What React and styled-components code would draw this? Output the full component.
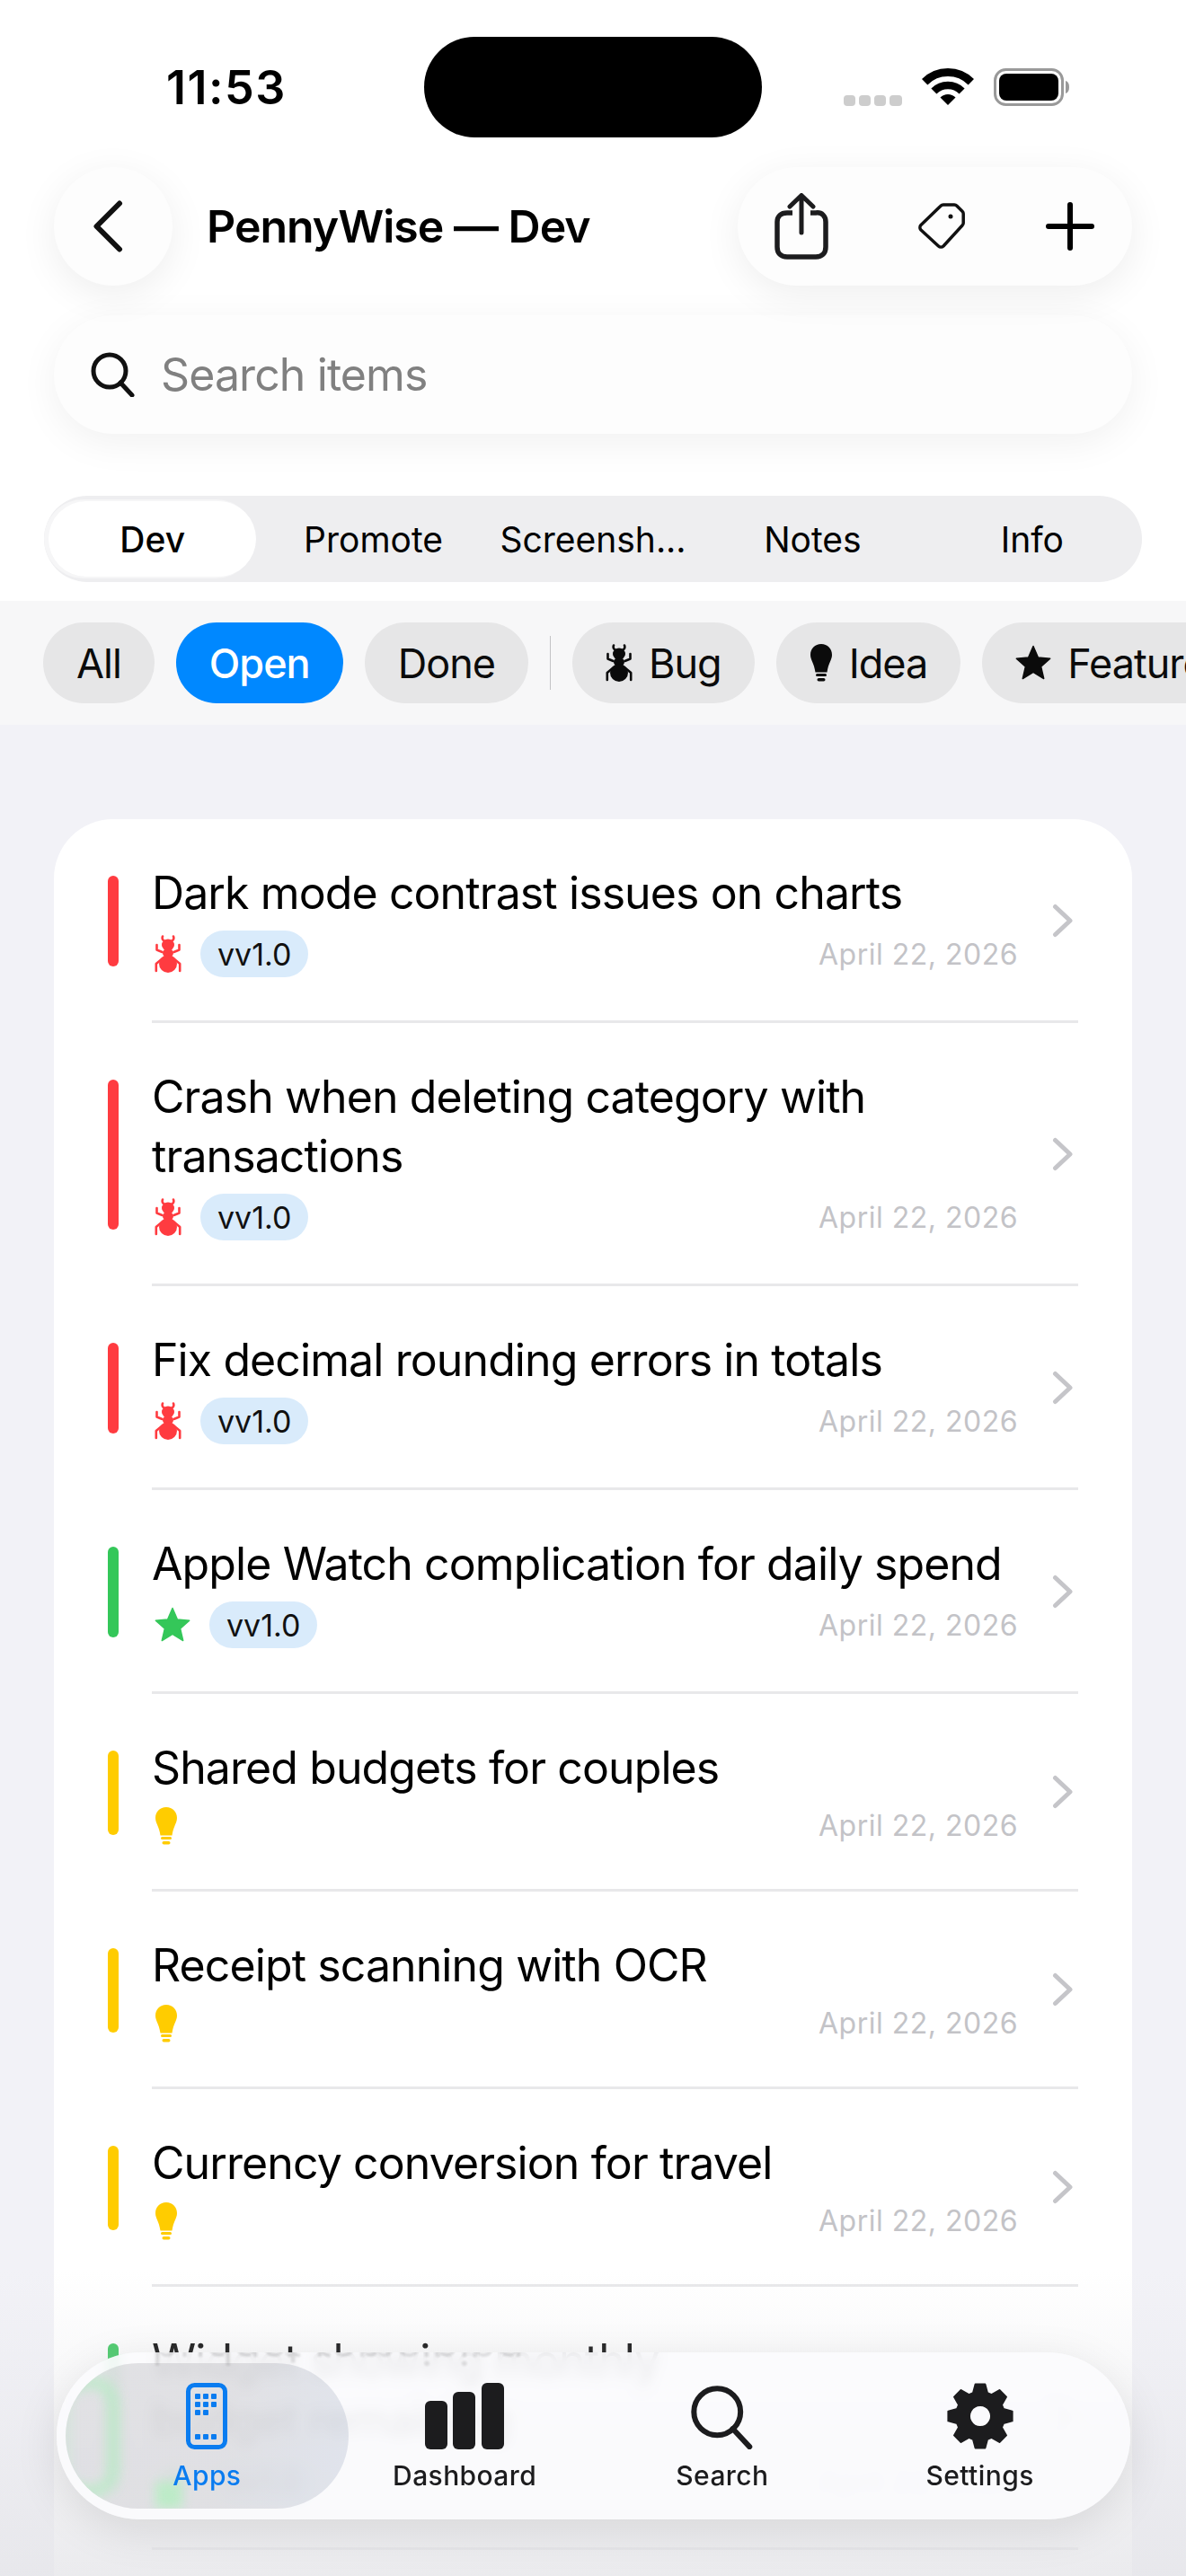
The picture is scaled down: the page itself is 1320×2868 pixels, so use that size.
import React from "react";
import styled, { createGlobalStyle } from "styled-components";

const GlobalStyle = createGlobalStyle`
  html, body {
    margin: 0;
    padding: 0;
    background: #f2f2f7;
  }
  * {
    box-sizing: border-box;
  }
`;

const ITEMS = [
  { title: "Dark mode contrast issues on charts", type: "bug", version: "vv1.0" },
  { title: "Crash when deleting category with transactions", type: "bug", version: "vv1.0" },
  { title: "Fix decimal rounding errors in totals", type: "bug", version: "vv1.0" },
  { title: "Apple Watch complication for daily spend", type: "feature", version: "vv1.0" },
  { title: "Shared budgets for couples", type: "idea" },
  { title: "Receipt scanning with OCR", type: "idea" },
  { title: "Currency conversion for travel", type: "idea" },
  { title: ["Widget showing monthly", "budget remaining"], type: "feature", version: "vv1.0" },
];

const TYPE_COLOR = { bug: "#ff3b40", feature: "#34c759", idea: "#ffcc00" };

const AntIcon = ({ size = 42, color = "currentColor" }) => (
  <svg width={(size * 30) / 42} height={size} viewBox="0 0 30 42" fill="none">
    <g stroke={color} strokeWidth="2.6" strokeLinecap="round" strokeLinejoin="round">
      <path d="M9 1.5c-1 2.5 0 4.5 3 5.5M21 1.5c1 2.5 0 4.5-3 5.5" />
      <path d="M2.5 11v5.5l6 2.5M27.5 11v5.5l-6 2.5" />
      <path d="M1.8 40v-8l6-5M28.200 40v-8l-6-5" />
    </g>
    <ellipse cx="15" cy="11" rx="7" ry="6.500" fill={color} />
    <ellipse cx="15" cy="20" rx="6" ry="5" fill={color} />
    <ellipse cx="15" cy="32" rx="10" ry="10" fill={color} />
  </svg>
);

const BulbIcon = ({ size = 42, color = "currentColor" }) => (
  <svg width={(size * 26) / 42} height={size} viewBox="0 0 26 42" fill="none">
    <path
      d="M13 0C6 0 1 5 1 12c0 6 4 9 5.500 19.500h13C21 21 25 18 25 12 25 5 20 0 13 0z"
      fill={color}
    />
    <rect x="7" y="33" width="12" height="3" rx="1.500" fill={color} />
    <rect x="8.500" y="38" width="9" height="3.500" rx="1.750" fill={color} />
  </svg>
);

const StarIcon = ({ size = 40, color = "currentColor" }) => (
  <svg width={size} height={size} viewBox="0 0 40 40">
    <path
      d="M20 1.500l5.400 12.600 13.300 1.100-10.100 8.900 3.100 13.400L20 30.400 8.300 37.500l3.100-13.400L1.300 15.200l13.300-1.100z"
      fill={color}
      stroke={color}
      strokeWidth="1.500"
      strokeLinejoin="round"
    />
  </svg>
);

const TypeIcon = ({ type, color }) => {
  if (type === "bug") return <AntIcon color={color} />;
  if (type === "idea") return <BulbIcon color={color} />;
  return <StarIcon color={color} />;
};

// 8 tooth cog, worked out once so the path stays readable in the markup
const gearPath = (() => {
  const cx = 37;
  const cy = 36;
  const parts = [];
  for (let i = 0; i < 8; i++) {
    const a = (i * Math.PI) / 4 - Math.PI / 2;
    const pts = [
      [-0.3, 27],
      [-0.15, 36],
      [0.15, 36],
      [0.3, 27],
    ];
    pts.forEach(([da, r], j) => {
      const x = (cx + r * Math.cos(a + da)).toFixed(1);
      const y = (cy + r * Math.sin(a + da)).toFixed(1);
      parts.push(`${i === 0 && j === 0 ? "M" : "L"}${x} ${y}`);
    });
  }
  return parts.join(" ") + "z M37 24a12 12 0 1 0 .01 0z";
})();

const SignalDots = () => (
  <svg width="65" height="12" viewBox="0 0 65 12" fill="#cdcdcd">
    <rect x="0" width="13" height="12" rx="4" />
    <rect x="17" width="13" height="12" rx="4" />
    <rect x="34" width="13" height="12" rx="4" />
    <rect x="51" width="14" height="12" rx="4" />
  </svg>
);

const WifiIcon = () => (
  <svg width="58" height="42" viewBox="0 0 58 42" fill="none" stroke="#000">
    <path d="M3.200 15.200a36.500 36.500 0 0 1 51.600 0" strokeWidth="9" />
    <path d="M13.400 25.400a22 22 0 0 1 31.200 0" strokeWidth="8.500" />
    <path d="M29 41l-8.500-8.500a12 12 0 0 1 17 0z" fill="#000" stroke="none" />
  </svg>
);

const BatteryIcon = () => (
  <svg width="84" height="42" viewBox="0 0 84 42" fill="none">
    <rect x="1.500" y="1.500" width="75" height="39" rx="12" stroke="#999" strokeWidth="3" />
    <rect x="6" y="6" width="66" height="30" rx="8" fill="#000" />
    <path d="M80 14c2.500.5 4 3 4 7s-1.500 6.500-4 7z" fill="#999" />
  </svg>
);

const BackIcon = () => (
  <svg width="34" height="58" viewBox="0 0 34 58" fill="none">
    <path d="M30 3.500L4.500 29 30 54.500" stroke="#111" strokeWidth="6" strokeLinecap="round" strokeLinejoin="round" />
  </svg>
);

const ShareIcon = () => (
  <svg width="60" height="74" viewBox="0 0 60 74" fill="none" stroke="#1c1c1e" strokeLinecap="round" strokeLinejoin="round">
    <path d="M20 22H14C7 22 3 26 3 32v28c0 7 4 11 11 11h32c7 0 11-4 11-11V32c0-6-4-11-11-10h-6" strokeWidth="5.500" strokeLinecap="butt" />
    <path d="M30 44V3M17 15L30 2.500 43 15" strokeWidth="5" />
  </svg>
);

const TagIcon = () => (
  <svg width="52" height="52" viewBox="0 0 52 52" fill="none" stroke="#111" strokeWidth="3.500" strokeLinejoin="round">
    <path d="M28 2h12a4 4 0 0 1 3 1.200l6 6a4 4 0 0 1 1.200 3V22a4 4 0 0 1-1.200 3L28 48a4 4 0 0 1-5.500 0L3 30a4 4 0 0 1 0-5.500L25 3.200A4 4 0 0 1 28 2z" />
    <circle cx="36" cy="15" r="2.500" fill="#111" stroke="none" />
  </svg>
);

const PlusIcon = () => (
  <svg width="54" height="54" viewBox="0 0 54 54" fill="none">
    <path d="M27 3v48M3 27h48" stroke="#000" strokeWidth="6" strokeLinecap="round" />
  </svg>
);

const SearchGlass = ({ size = 50, stroke = 5, color = "#111" }) => (
  <svg width={size} height={size} viewBox="0 0 50 50" fill="none">
    <ellipse cx="21" cy="21" rx="18" ry="18" stroke={color} strokeWidth={stroke} />
    <path d="M33 34l13 14" stroke={color} strokeWidth={stroke} strokeLinecap="round" />
  </svg>
);

const RowChevron = () => (
  <svg width="24" height="38" viewBox="0 0 24 38" fill="none">
    <path d="M3.500 3.500L20 19 3.500 34.500" stroke="#c5c5c9" strokeWidth="5" strokeLinecap="round" strokeLinejoin="round" />
  </svg>
);

const AppsIcon = () => (
  <svg width="46" height="74" viewBox="0 0 46 74" fill="#0a7cf0">
    <rect x="2.500" y="2.500" width="41" height="69" rx="7" fill="none" stroke="#0a7cf0" strokeWidth="5" />
    {[10, 19, 28].map((x) =>
      [12, 21].map((y) => <rect key={`${x}-${y}`} x={x} y={y} width="6" height="6" rx="1" />)
    )}
    <rect x="10" y="30" width="6" height="6" rx="1" />
    <rect x="19" y="30" width="6" height="6" rx="1" />
    {[10, 19, 28].map((x) => (
      <rect key={x} x={x} y="57" width="6" height="6" rx="1" />
    ))}
  </svg>
);

const BarsIcon = () => (
  <svg width="88" height="74" viewBox="0 0 88 74" fill="#1c1c1e">
    <rect x="0" y="20" width="25" height="54" rx="6" />
    <rect x="31" y="10" width="25" height="64" rx="6" />
    <rect x="63" y="0" width="25" height="74" rx="6" />
  </svg>
);

const GearIcon = () => (
  <svg width="74" height="74" viewBox="0 0 74 72" fill="#1c1c1e" fillRule="evenodd">
    <path d={gearPath} stroke="#1c1c1e" strokeWidth="2" strokeLinejoin="round" />
  </svg>
);

const App = () => {
  return (
    <Screen>
      <GlobalStyle />
      <Header>
        <StatusBar>
          <Clock>11:53</Clock>
          <StatusIcons>
            <SignalDots />
            <WifiIcon />
            <BatteryIcon />
          </StatusIcons>
        </StatusBar>
        <Island />

        <NavRow>
          <BackButton>
            <BackIcon />
          </BackButton>
          <PageTitle>PennyWise — Dev</PageTitle>
          <ActionPill>
            <ShareIcon />
            <TagIcon />
            <PlusIcon />
          </ActionPill>
        </NavRow>

        <SearchBox>
          <SearchGlass />
          <SearchText>Search items</SearchText>
        </SearchBox>

        <Segments>
          {["Dev", "Promote", "Screensh...", "Notes", "Info"].map((label, i) => (
            <Segment key={label} $active={i === 0}>
              {label}
            </Segment>
          ))}
        </Segments>
      </Header>

      <FilterBar>
        <Chip>All</Chip>
        <Chip $active>Open</Chip>
        <Chip>Done</Chip>
        <ChipDivider />
        <Chip>
          <AntIcon color="#0b0b0b" />
          Bug
        </Chip>
        <Chip>
          <BulbIcon color="#0b0b0b" />
          Idea
        </Chip>
        <Chip>
          <StarIcon color="#0b0b0b" />
          Features
        </Chip>
      </FilterBar>

      <ListArea>
        <Card>
          {ITEMS.map((item) => {
            const lines = [].concat(item.title);
            const color = TYPE_COLOR[item.type];
            return (
              <Row key={lines[0]}>
                <Accent $color={color} />
                <RowBody>
                  <RowMain>
                    <RowTitle>
                      {lines.map((line) => (
                        <RowLine key={line}>{line}</RowLine>
                      ))}
                    </RowTitle>
                    <RowMeta>
                      <TypeIcon type={item.type} color={color} />
                      {item.version && <Version>{item.version}</Version>}
                      <RowDate>April 22, 2026</RowDate>
                    </RowMeta>
                  </RowMain>
                  <ChevronSlot>
                    <RowChevron />
                  </ChevronSlot>
                </RowBody>
              </Row>
            );
          })}
        </Card>
      </ListArea>

      <BottomFade />

      <TabBar>
        <Reflection aria-hidden="true">budget remaining</Reflection>
        <TabLens>
          <LensRing />
          <LensSpot />
        </TabLens>
        <Tab $active>
          <TabIcon>
            <AppsIcon />
          </TabIcon>
          Apps
        </Tab>
        <Tab>
          <TabIcon>
            <BarsIcon />
          </TabIcon>
          Dashboard
        </Tab>
        <Tab>
          <TabIcon>
            <SearchGlass size={72} stroke={4.200} color="#1c1c1e" />
          </TabIcon>
          Search
        </Tab>
        <Tab>
          <TabIcon>
            <GearIcon />
          </TabIcon>
          Settings
        </Tab>
      </TabBar>
    </Screen>
  );
};

export default App;

const Screen = styled.div`
  position: relative;
  width: 1320px;
  height: 2868px;
  overflow: hidden;
  background: #f2f2f7;
  font-family: Inter, "Liberation Sans", sans-serif;
  color: #000;
`;

const Header = styled.div`
  position: relative;
  background: #fff;
  padding-bottom: 21px;
`;

const StatusBar = styled.div`
  height: 186px;
  display: flex;
  align-items: flex-start;
  justify-content: space-between;
  padding: 70px 130px 0 185px;
`;

const Clock = styled.div`
  font-size: 52px;
  font-weight: 600;
  line-height: 56px;
  letter-spacing: 1.5px;
`;

const StatusIcons = styled.div`
  display: flex;
  align-items: flex-end;
  gap: 22px;
  margin-top: 6px;
`;

const Island = styled.div`
  position: absolute;
  left: 472px;
  top: 41px;
  width: 376px;
  height: 112px;
  border-radius: 56px;
  background: #000;
`;

const NavRow = styled.div`
  display: flex;
  align-items: center;
  height: 132px;
  padding: 0 60px;
`;

const BackButton = styled.div`
  width: 132px;
  height: 132px;
  border-radius: 50%;
  background: #fdfdfd;
  box-shadow: 0 10px 44px rgba(0, 0, 0, 0.07);
  display: flex;
  align-items: center;
  justify-content: center;
  padding-right: 12px;
`;

const PageTitle = styled.div`
  flex: 1;
  margin-left: 38px;
  font-size: 50px;
  font-weight: 600;
  letter-spacing: -1px;
`;

const ActionPill = styled.div`
  width: 439px;
  height: 132px;
  border-radius: 66px;
  background: #fdfdfd;
  box-shadow: 0 10px 44px rgba(0, 0, 0, 0.07);
  display: flex;
  align-items: center;
  justify-content: space-between;
  padding: 0 42px 0 41px;

  svg:nth-child(2) {
    margin-left: 10px;
  }
`;

const SearchBox = styled.div`
  margin: 33px 60px 0;
  height: 132px;
  border-radius: 66px;
  background: #fdfdfd;
  box-shadow: 0 10px 44px rgba(0, 0, 0, 0.06);
  display: flex;
  align-items: center;
  gap: 28px;
  padding: 0 41px;
`;

const SearchText = styled.div`
  font-size: 50px;
  color: #808080;
  letter-spacing: -0.9px;
`;

const Segments = styled.div`
  margin: 69px 49px 0;
  height: 96px;
  border-radius: 48px;
  background: #eeeef0;
  display: grid;
  grid-template-columns: repeat(5, 1fr);
  align-items: stretch;
`;

const Segment = styled.div`
  display: flex;
  align-items: center;
  justify-content: center;
  font-size: 39px;
  font-weight: ${(p) => (p.$active ? 500 : 400)};
  border-radius: 42px;
  background: ${(p) => (p.$active ? "#fff" : "transparent")};
  margin: ${(p) => (p.$active ? "6px 8px 6px 5px" : "0")};
  box-shadow: ${(p) => (p.$active ? "-3px 0 0 2px #f6f6f7" : "none")};
`;

const FilterBar = styled.div`
  height: 138px;
  background: #f7f7f8;
  display: flex;
  align-items: center;
  gap: 24px;
  padding: 0 48px;
  overflow: hidden;
`;

const Chip = styled.div`
  flex-shrink: 0;
  height: 90px;
  border-radius: 45px;
  padding: 0 37px;
  display: flex;
  align-items: center;
  gap: 18px;
  font-size: 45px;
  letter-spacing: -1px;
  font-weight: ${(p) => (p.$active ? 500 : 400)};
  color: ${(p) => (p.$active ? "#fff" : "#0b0b0b")};
  background: ${(p) => (p.$active ? "#0088ff" : "#e6e6e7")};
`;

const ChipDivider = styled.div`
  flex-shrink: 0;
  width: 1px;
  height: 60px;
  background: #c4c4c6;
`;

const ListArea = styled.div`
  padding: 105px 60px 0;
`;

const Card = styled.div`
  background: #fff;
  border-radius: 66px;
  padding-bottom: 120px;
`;

const Row = styled.div`
  display: flex;
  padding-left: 60px;
`;

const Accent = styled.div`
  flex-shrink: 0;
  width: 12px;
  margin: 63px 37px 63px 0;
  border-radius: 6px;
  background: ${(p) => p.$color};
`;

const RowBody = styled.div`
  flex: 1;
  min-width: 0;
  display: flex;
  margin-right: 60px;
  padding: 49px 0 48px;
  border-bottom: 3px solid #e8e8ea;
`;

const RowMain = styled.div`
  flex: 1;
  min-width: 0;
`;

const RowTitle = styled.div`
  font-size: 50px;
  line-height: 66px;
  letter-spacing: -0.9px;
`;

const RowLine = styled.span`
  &:not(:last-child)::after {
    content: "\\A";
    white-space: pre;
  }
`;

const RowMeta = styled.div`
  margin-top: 9px;
  min-height: 45px;
  display: flex;
  align-items: center;
  gap: 21px;
  padding-left: 3px;
`;

const Version = styled.div`
  height: 52px;
  padding: 0 19px;
  border-radius: 26px;
  background: #d9ebfb;
  display: flex;
  align-items: center;
  font-size: 34px;
  font-weight: 400;
  color: #111;
`;

const RowDate = styled.div`
  margin-left: auto;
  font-size: 32px;
  color: #c3c3c7;
  letter-spacing: 0.5px;
`;

const ChevronSlot = styled.div`
  flex-shrink: 0;
  width: 67px;
  display: flex;
  align-items: center;
  justify-content: flex-end;
  padding-right: 5px;
`;

const BottomFade = styled.div`
  position: absolute;
  left: 0;
  right: 0;
  bottom: 0;
  height: 340px;
  background: linear-gradient(rgba(228, 228, 232, 0), rgba(228, 228, 232, 0.75));
  pointer-events: none;
`;

const TabBar = styled.div`
  position: absolute;
  left: 63px;
  top: 2619px;
  width: 1195px;
  height: 186px;
  border-radius: 93px;
  padding: 0 24px;
  display: flex;
  background: rgba(251, 251, 253, 0.9);
  backdrop-filter: blur(7px);
  box-shadow: 0 12px 50px rgba(0, 0, 0, 0.1);
  overflow: hidden;
`;

const Reflection = styled.div`
  position: absolute;
  left: 106px;
  top: -22px;
  font-size: 50px;
  line-height: 36px;
  color: #000;
  opacity: 0.1;
  filter: blur(1px);
  transform: scaleY(-1);
`;

const TabLens = styled.div`
  position: absolute;
  left: 10px;
  top: 12px;
  width: 315px;
  height: 162px;
  border-radius: 81px;
  overflow: hidden;
  background: linear-gradient(100deg, rgba(120, 120, 128, 0.2) 55%, rgba(110, 130, 165, 0.18));
`;

const LensRing = styled.div`
  position: absolute;
  left: 0;
  top: 16px;
  width: 58px;
  height: 132px;
  border: 10px solid #b5ebc3;
  border-left-width: 3px;
  border-radius: 40px;
  filter: blur(7px);
`;

const LensSpot = styled.div`
  position: absolute;
  left: 100px;
  top: 132px;
  width: 30px;
  height: 30px;
  background: #bdebc8;
  filter: blur(6px);
`;

const Tab = styled.div`
  position: relative;
  flex: 1;
  display: flex;
  flex-direction: column;
  align-items: center;
  padding-top: 34px;
  font-size: 30px;
  font-weight: 500;
  line-height: 38px;
  letter-spacing: 0.4px;
  color: ${(p) => (p.$active ? "#0a7cf0" : "#1c1c1e")};
`;

const TabIcon = styled.div`
  height: 74px;
  margin-bottom: 10px;
  display: flex;
  align-items: flex-end;
`;
